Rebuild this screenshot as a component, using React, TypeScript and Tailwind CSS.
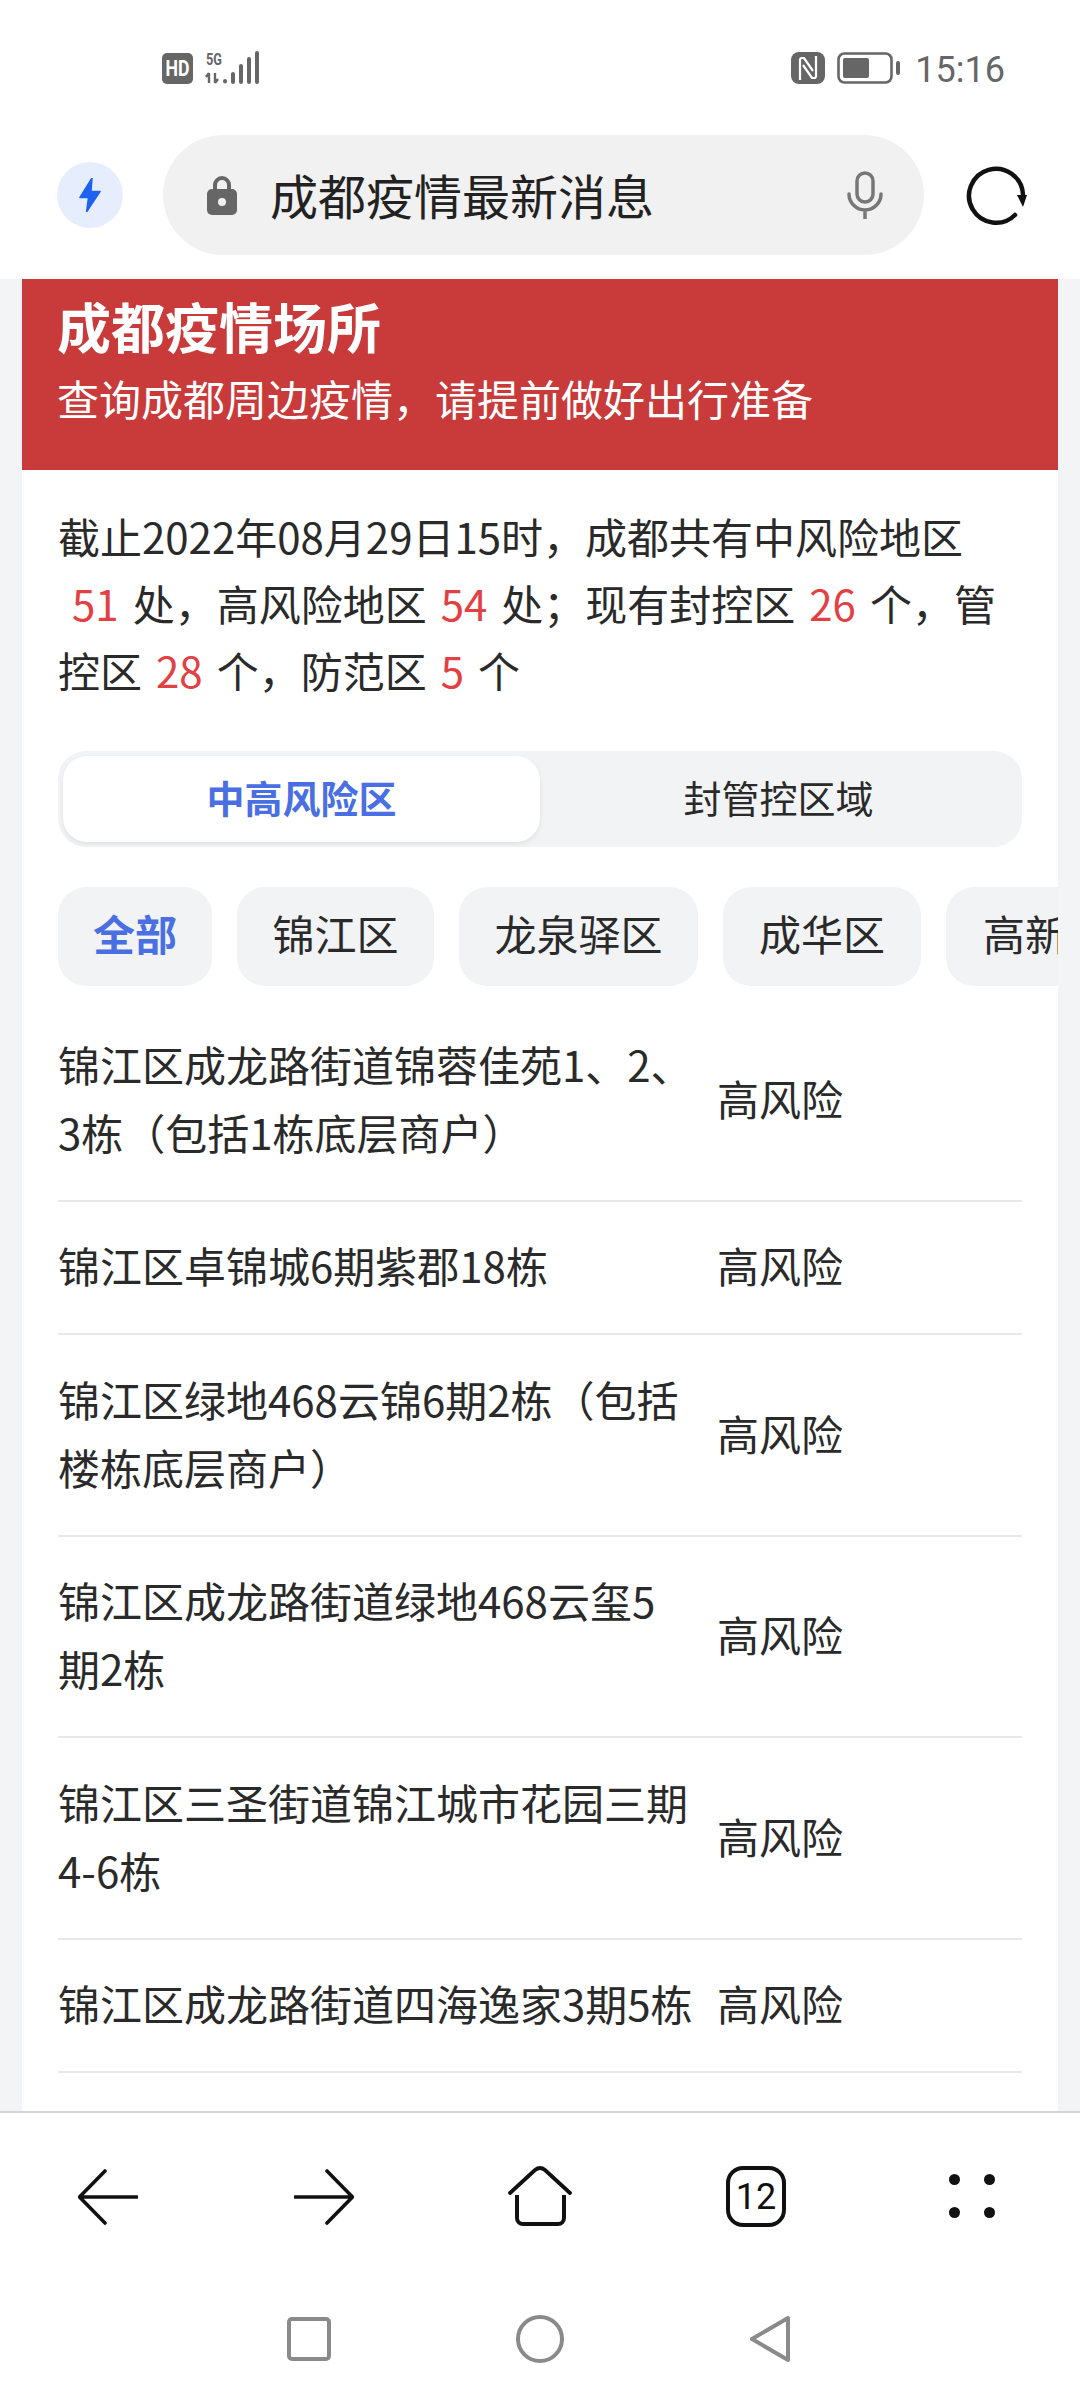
const font = { fontFamily: '"Noto Sans CJK SC", sans-serif' };

function Red({ children }: { children: React.ReactNode }) {
  return <span className="px-[14px] text-[#e34044]">{children}</span>;
}

const rows = [
  { t: "锦江区成龙路街道锦蓉佳苑1、2、3栋（包括1栋底层商户）", h: "h-[216px] pt-[9px]" },
  { t: "锦江区卓锦城6期紫郡18栋", h: "h-[133px] pb-[5px]" },
  { t: "锦江区绿地468云锦6期2栋（包括楼栋底层商户）", h: "h-[202px] pb-[5px]" },
  { t: "锦江区成龙路街道绿地468云玺5期2栋", h: "h-[201px] pb-[5px]" },
  { t: "锦江区三圣街道锦江城市花园三期4-6栋", h: "h-[202px] pb-[5px]" },
  { t: "锦江区成龙路街道四海逸家3期5栋", h: "h-[133px] pb-[5px]" },
];

const chips = [
  { t: "全部", c: "w-[154px] font-bold text-[#4a6fe3]" },
  { t: "锦江区", c: "w-[197px] text-[#2a2a2a]" },
  { t: "龙泉驿区", c: "w-[239px] text-[#2a2a2a]" },
  { t: "成华区", c: "w-[198px] text-[#2a2a2a]" },
];

export default function App() {
  return (
    <div style={font} className="flex h-[2400px] w-[1080px] flex-col overflow-hidden bg-white">
      {/* status bar */}
      <div className="flex h-[135px] shrink-0 items-start justify-between pl-[162px] pr-[75px] pt-[50px]">
        <svg width="98" height="36" viewBox="0 0 98 36">
          <rect x="0" y="3" width="31" height="31" rx="5" fill="#666666" />
          <text x="15.5" y="26" textAnchor="middle" fontSize="22" fontWeight="700" fill="#fff" fontFamily="Roboto" textLength="24" lengthAdjust="spacingAndGlyphs">HD</text>
          <text x="44" y="15" fontSize="17" fontWeight="700" fill="#666666" fontFamily="Roboto" textLength="16" lengthAdjust="spacingAndGlyphs">5G</text>
          <path d="M47 23v10M44 27l3-4M53 23v10M56 29l-3 4" stroke="#666666" strokeWidth="2.4" fill="none" />
          <g stroke="#666666" strokeWidth="4" strokeLinecap="round">
            <path d="M63 31v.5M71 24v8M79 16v16M87 9v23M95 3v29" />
          </g>
        </svg>
        <div className="flex items-start pt-[2px]">
          <svg width="34" height="32" viewBox="0 0 34 32" className="mr-[12px]">
            <rect x="0" y="0" width="34" height="32" rx="8" fill="#666666" />
            <path d="M9 28V8q0-2 2-2h2l9 13M25 4v20q0 2-2 2h-2l-9-13" stroke="#fff" strokeWidth="2.2" fill="none" />
          </svg>
          <svg width="64" height="32" viewBox="0 0 64 32" className="mr-[14px]">
            <rect x="1.5" y="1.5" width="53" height="29" rx="6" fill="none" stroke="#666666" strokeWidth="2.6" />
            <rect x="6" y="6" width="26" height="20" rx="2" fill="#666666" />
            <rect x="59" y="9" width="4" height="14" rx="2" fill="#666666" />
          </svg>
          <span className="mt-[2px] text-[36px] leading-[32px] text-[#666666]" style={{ fontFamily: "Roboto, sans-serif" }}>15:16</span>
        </div>
      </div>

      {/* toolbar */}
      <div className="flex h-[144px] shrink-0 items-start pl-[57px]">
        <div className="mt-[27px] flex h-[66px] w-[66px] shrink-0 items-center justify-center rounded-full bg-[#e6eefe]">
          <svg width="26" height="34" viewBox="0 0 26 34">
            <path d="M15 0 3 19.5h8.5L9.5 34 23 13.5h-9z" fill="#1f62f2" stroke="#1f62f2" strokeLinejoin="round" strokeWidth="1.5" />
          </svg>
        </div>
        <div className="ml-[40px] flex h-[120px] w-[761px] shrink-0 items-center rounded-full bg-[#f1f1f1] pl-[44px] pr-[41px]">
          <svg width="30" height="39" viewBox="0 0 30 39" className="shrink-0">
            <path d="M8 15V9a7 7 0 0 1 14 0v6" fill="none" stroke="#666666" strokeWidth="4" />
            <rect x="0" y="13" width="30" height="26" rx="5" fill="#666666" />
            <circle cx="15" cy="26" r="4" fill="#f1f1f1" />
          </svg>
          <span className="ml-[33px] flex-1 pb-[3px] text-[48px] leading-[60px] text-[#222222]">成都疫情最新消息</span>
          <svg width="36" height="48" viewBox="0 0 36 48" className="shrink-0">
            <rect x="10" y="2" width="16" height="29" rx="8" fill="none" stroke="#777777" strokeWidth="3.5" />
            <path d="M2 23a16 16 0 0 0 32 0M18 39v9" fill="none" stroke="#777777" strokeWidth="3.5" strokeLinecap="round" />
          </svg>
        </div>
        <svg width="64" height="64" viewBox="0 0 64 64" className="ml-[41px] mt-[28px] shrink-0">
          <path d="M50 52A27 27 0 1 1 58 32" fill="none" stroke="#111111" strokeWidth="4.5" strokeLinecap="round" />
          <path d="M52 32h10l-4 12z" fill="#111111" />
        </svg>
      </div>

      {/* page */}
      <div className="flex-1 overflow-hidden border-b-2 border-[#d4d4d4] bg-[#f3f4f6] px-[22px]">
        <div className="h-full bg-white">
          <div className="h-[191px] bg-[#c93a3a] px-[35px] pt-[12px] text-white">
            <div className="text-[54px] font-bold leading-[70px]">成都疫情场所</div>
            <div className="mt-[8px] text-[42px] leading-[58px]">查询成都周边疫情，请提前做好出行准备</div>
          </div>
          <div className="px-[36px]">
            <p className="pt-[32px] text-[42px] leading-[67px] text-[#2a2a2a]">
              截止2022年08月29日15时，成都共有中风险地区
              <Red>51</Red>处，高风险地区<Red>54</Red>处；现有封控区<Red>26</Red>个，管控区<Red>28</Red>个，防范区<Red>5</Red>个
            </p>
            <div className="mt-[48px] flex h-[96px] rounded-[28px] bg-[#f2f3f5] p-[5px]">
              <div className="flex h-[86px] w-[477px] items-center justify-center rounded-[24px] bg-white pb-[5px] text-[38px] font-bold text-[#4a6fe3] shadow-[0_2px_5px_rgba(0,0,0,0.08)]">中高风险区</div>
              <div className="flex flex-1 items-center justify-center pb-[5px] text-[38px] text-[#2a2a2a]">封管控区域</div>
            </div>
            <div className="-mr-[36px] mt-[40px] flex h-[99px] gap-[25px] overflow-hidden">
              {chips.map((c) => (
                <div key={c.t} className={`flex h-[99px] shrink-0 items-center justify-center rounded-[28px] bg-[#f2f3f5] pb-[8px] text-[42px] ${c.c}`}>{c.t}</div>
              ))}
              <div className="h-[99px] w-[160px] shrink-0 overflow-hidden whitespace-nowrap rounded-[28px] bg-[#f2f3f5] pl-[37px] text-[42px] leading-[91px] text-[#2a2a2a]">高新区</div>
            </div>
            <div>
              {rows.map((r) => (
                <div key={r.t} className={`flex items-center border-b-2 border-[#e8e8e8] ${r.h}`}>
                  <div className="mr-[21px] w-[638px] shrink-0 text-[42px] leading-[68px] text-[#2a2a2a]">{r.t}</div>
                  <div className="text-[42px] leading-[68px] text-[#2a2a2a]">高风险</div>
                </div>
              ))}
            </div>
          </div>
        </div>
      </div>

      {/* browser nav */}
      <div className="flex h-[168px] shrink-0 items-start pl-[78px] pt-[53px]">
        <svg width="60" height="56" viewBox="0 0 60 56" className="mt-[3px]">
          <path d="M27 2 1.5 28H59M1.5 28 27 54" fill="none" stroke="#111111" strokeWidth="3.6" strokeLinecap="round" strokeLinejoin="round" />
        </svg>
        <svg width="60" height="56" viewBox="0 0 60 56" className="ml-[156px] mt-[3px]">
          <path d="M33 2l25.500 26H1M58.500 28 33 54" fill="none" stroke="#111111" strokeWidth="3.6" strokeLinecap="round" strokeLinejoin="round" />
        </svg>
        <svg width="64" height="62" viewBox="0 0 64 62" className="ml-[154px]">
          <path d="M2 27 27 4q5-4 10 0l25 23" fill="none" stroke="#111111" strokeWidth="3.8" strokeLinecap="round" />
          <path d="M9 29v23a6 6 0 0 0 6 6h35a6 6 0 0 0 6-6V29" fill="none" stroke="#111111" strokeWidth="4" />
        </svg>
        <div className="ml-[154px] flex h-[61px] w-[60px] items-center justify-center rounded-[17px] border-[4px] border-[#111111] text-[36px] leading-none text-[#111111]" style={{ fontFamily: "Roboto, sans-serif" }}>12</div>
        <svg width="46" height="44" viewBox="0 0 46 44" className="ml-[163px] mt-[8px]">
          <circle cx="5.500" cy="5.500" r="5.500" fill="#111111" />
          <circle cx="40.500" cy="5.500" r="5.500" fill="#111111" />
          <circle cx="5.500" cy="38.500" r="5.500" fill="#111111" />
          <circle cx="40.500" cy="38.500" r="5.500" fill="#111111" />
        </svg>
      </div>

      {/* system nav */}
      <div className="flex h-[119px] shrink-0 items-start pl-[287px] pt-[34px]">
        <svg width="44" height="44" viewBox="0 0 44 44" className="mt-[2px]">
          <rect x="2" y="2" width="40" height="40" rx="3" fill="none" stroke="#8a8a8a" strokeWidth="4" />
        </svg>
        <svg width="48" height="48" viewBox="0 0 48 48" className="ml-[185px]">
          <circle cx="24" cy="24" r="22" fill="none" stroke="#8a8a8a" strokeWidth="4" />
        </svg>
        <svg width="42" height="48" viewBox="0 0 42 48" className="ml-[185px]">
          <path d="M39 3v42L3 24z" fill="none" stroke="#8a8a8a" strokeWidth="4" strokeLinejoin="round" />
        </svg>
      </div>
    </div>
  );
}
